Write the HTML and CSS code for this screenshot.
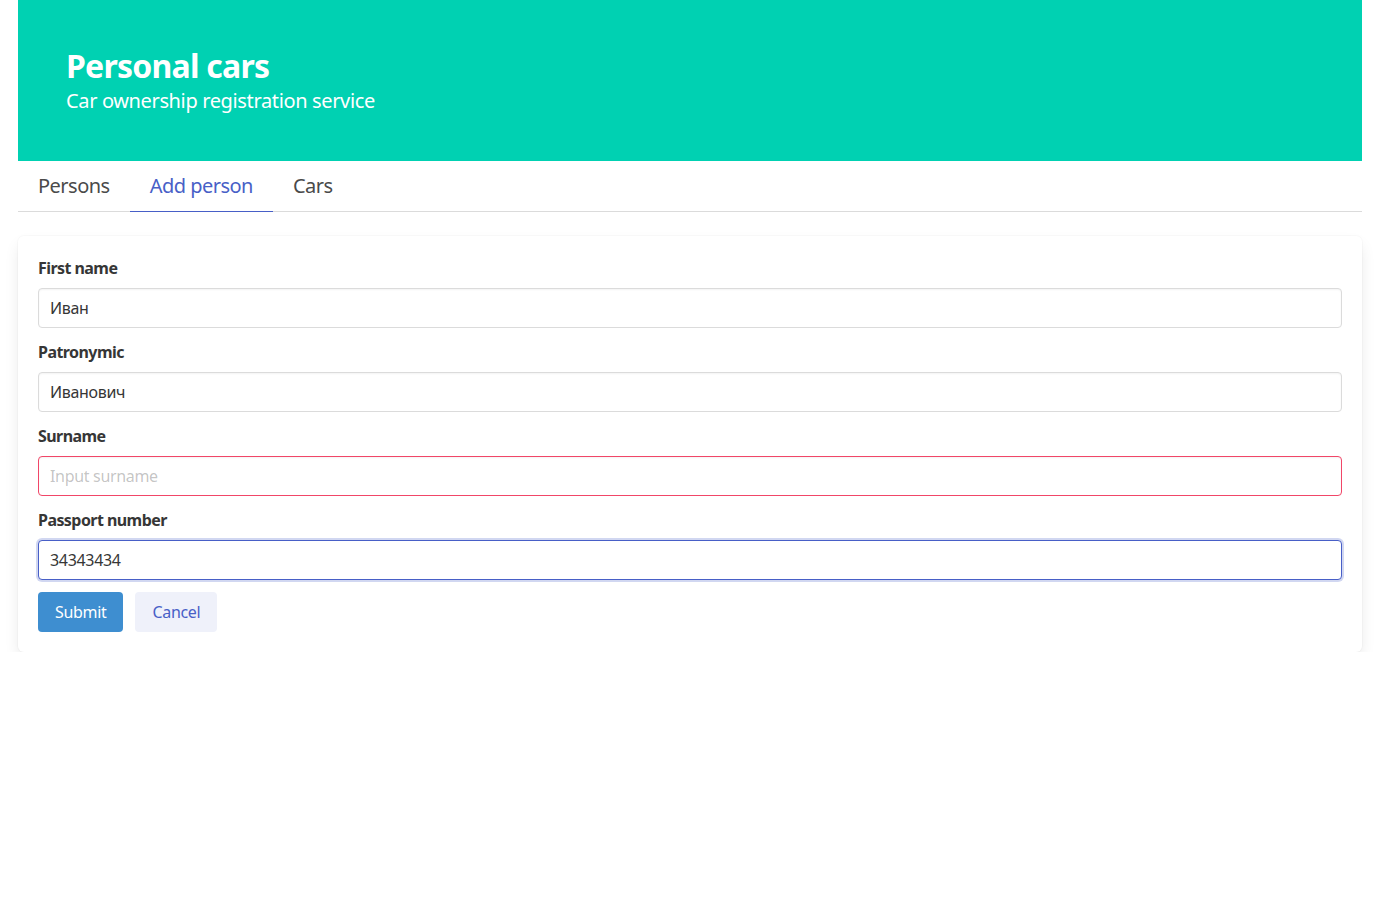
FILE: index.html
```html
<!DOCTYPE html>
<html lang="en">
<head>
<meta charset="utf-8">
<title>Personal cars</title>
<link rel="stylesheet" href="styles.css">
</head>
<body>
<div class="container">
  <section class="hero">
    <h1 class="title">Personal cars</h1>
    <p class="subtitle">Car ownership registration service</p>
  </section>
  <nav class="tabs">
    <a class="tab">Persons</a>
    <a class="tab active">Add person</a>
    <a class="tab">Cars</a>
  </nav>
  <form class="box">
    <div class="field">
      <label class="label">First name</label>
      <input class="input" type="text" value="Иван" placeholder="Input first name">
    </div>
    <div class="field">
      <label class="label">Patronymic</label>
      <input class="input" type="text" value="Иванович" placeholder="Input patronymic">
    </div>
    <div class="field">
      <label class="label">Surname</label>
      <input class="input danger" type="text" placeholder="Input surname">
    </div>
    <div class="field">
      <label class="label">Passport number</label>
      <input class="input focused" type="text" value="34343434" placeholder="Input passport number">
    </div>
    <div class="buttons">
      <button type="button" class="btn info">Submit</button>
      <button type="button" class="btn light">Cancel</button>
    </div>
  </form>
</div>
</body>
</html>
```
FILE: styles.css
```css
* { box-sizing: border-box; }
html, body { margin: 0; padding: 0; background: #fff; }
body {
  font-family: "Noto Sans", "Open Sans", "DejaVu Sans", sans-serif;
  color: #4a4a4a;
  font-size: 16px;
  line-height: 1.5;
  letter-spacing: -0.02em;
}
.container { margin: 0 18px; }
.hero {
  background: #00d1b2;
  padding: 48px;
  height: 161px;
}
.title {
  margin: 0;
  color: #fff;
  font-size: 32px;
  font-weight: 700;
  line-height: 36px;
  letter-spacing: -0.024em;
}
.subtitle {
  margin: 4px 0 0;
  color: #fff;
  font-size: 20px;
  line-height: 25px;
  letter-spacing: -0.018em;
}
.tabs {
  display: flex;
  border-bottom: 1px solid #dbdbdb;
  font-size: 20px;
  margin-bottom: 24px;
}
.tab {
  display: block;
  padding: 10px 20px;
  line-height: 30px;
  color: #4a4a4a;
  border-bottom: 1px solid #dbdbdb;
  margin-bottom: -1px;
  cursor: pointer;
  letter-spacing: -0.026em;
}
.tab.active {
  color: #485fc7;
  border-bottom-color: #485fc7;
}
.box {
  display: block;
  background: #fff;
  border-radius: 6px;
  box-shadow: 0 0.5em 1em -0.125em rgba(10,10,10,0.1), 0 0 0 1px rgba(10,10,10,0.02);
  padding: 20px;
}
.field { margin-bottom: 12px; }
.label {
  display: block;
  color: #363636;
  font-weight: 700;
  font-size: 16px;
  line-height: 24px;
  margin-bottom: 8px;
  letter-spacing: -0.035em;
}
.input {
  display: block;
  width: 100%;
  height: 40px;
  padding: 0 11px;
  font-family: inherit;
  font-size: 16px;
  letter-spacing: -0.02em;
  color: #363636;
  background: #fff;
  border: 1px solid #dbdbdb;
  border-radius: 4px;
  box-shadow: inset 0 0.0625em 0.125em rgba(10,10,10,0.05);
  outline: none;
}
.input::placeholder { color: rgba(54,54,54,0.3); }
.input.danger { border-color: #f14668; }
.input.focused {
  border-color: #485fc7;
  box-shadow: 0 0 0 2px rgba(72,95,199,0.25);
}
.buttons { display: flex; gap: 12px; }
.btn {
  height: 40px;
  padding: 0 16px;
  font-family: inherit;
  font-size: 16px;
  letter-spacing: -0.02em;
  border: 1px solid transparent;
  border-radius: 4px;
  cursor: pointer;
}
.btn.info { background: #3e8ed0; color: #fff; }
.btn.light { background: #eff1fa; color: #485fc7; }
```
